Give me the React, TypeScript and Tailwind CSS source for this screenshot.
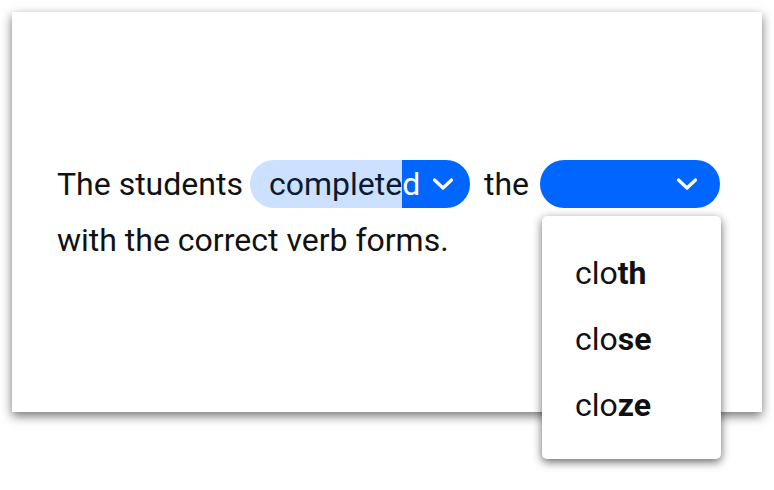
import React from "react";

function Chevron() {
  return (
    <svg width="22" height="14" viewBox="0 0 22 14" fill="none">
      <path d="M2.5 3 L11 11 L19.5 3" stroke="white" strokeWidth="3.2" strokeLinecap="round" strokeLinejoin="round" />
    </svg>
  );
}

export default function App() {
  return (
    <div className="w-[774px] h-[490px] bg-white p-[12px]" style={{ fontFamily: "Roboto, 'Noto Sans', sans-serif" }}>
      <div className="w-[750px] h-[400px] bg-white shadow-[0_4px_10px_rgba(0,0,0,0.55)] pl-[45px] pt-[148px] text-[32px] text-[#111]">
        <div className="flex items-center h-[48px]">
          <span>The students</span>
          <div className="ml-[7px] w-[220px] h-[48px] rounded-full bg-[#cce0ff] flex items-center overflow-hidden">
            <div className="h-full flex items-center pl-[19px] text-[#0b1a33] shrink-0">
              complete
            </div>
            <div className="h-full flex-1 bg-[#0066ff] flex items-center">
              <span className="text-white">d</span>
              <span className="ml-[12px] flex items-center"><Chevron /></span>
            </div>
          </div>
          <span className="ml-[14px]">the</span>
          <div className="relative ml-[11px]">
            <div className="w-[180px] h-[48px] rounded-full bg-[#0066ff] flex items-center justify-end pr-[22px]">
              <Chevron />
            </div>
            <div className="absolute left-[2px] top-[56px] w-[179px] bg-white rounded-[5px] shadow-[0_3px_10px_rgba(0,0,0,0.6)] pt-[24px] pb-[21px] z-10">
              {[["clo", "th"], ["clo", "se"], ["clo", "ze"]].map(([a, b]) => (
                <div key={b} className="h-[66px] flex items-center pl-[33px]">
                  <span>{a}</span><span className="font-bold">{b}</span>
                </div>
              ))}
            </div>
          </div>
        </div>
        <div className="mt-[8px] h-[48px] flex items-center">with the correct verb forms.</div>
      </div>
    </div>
  );
}
